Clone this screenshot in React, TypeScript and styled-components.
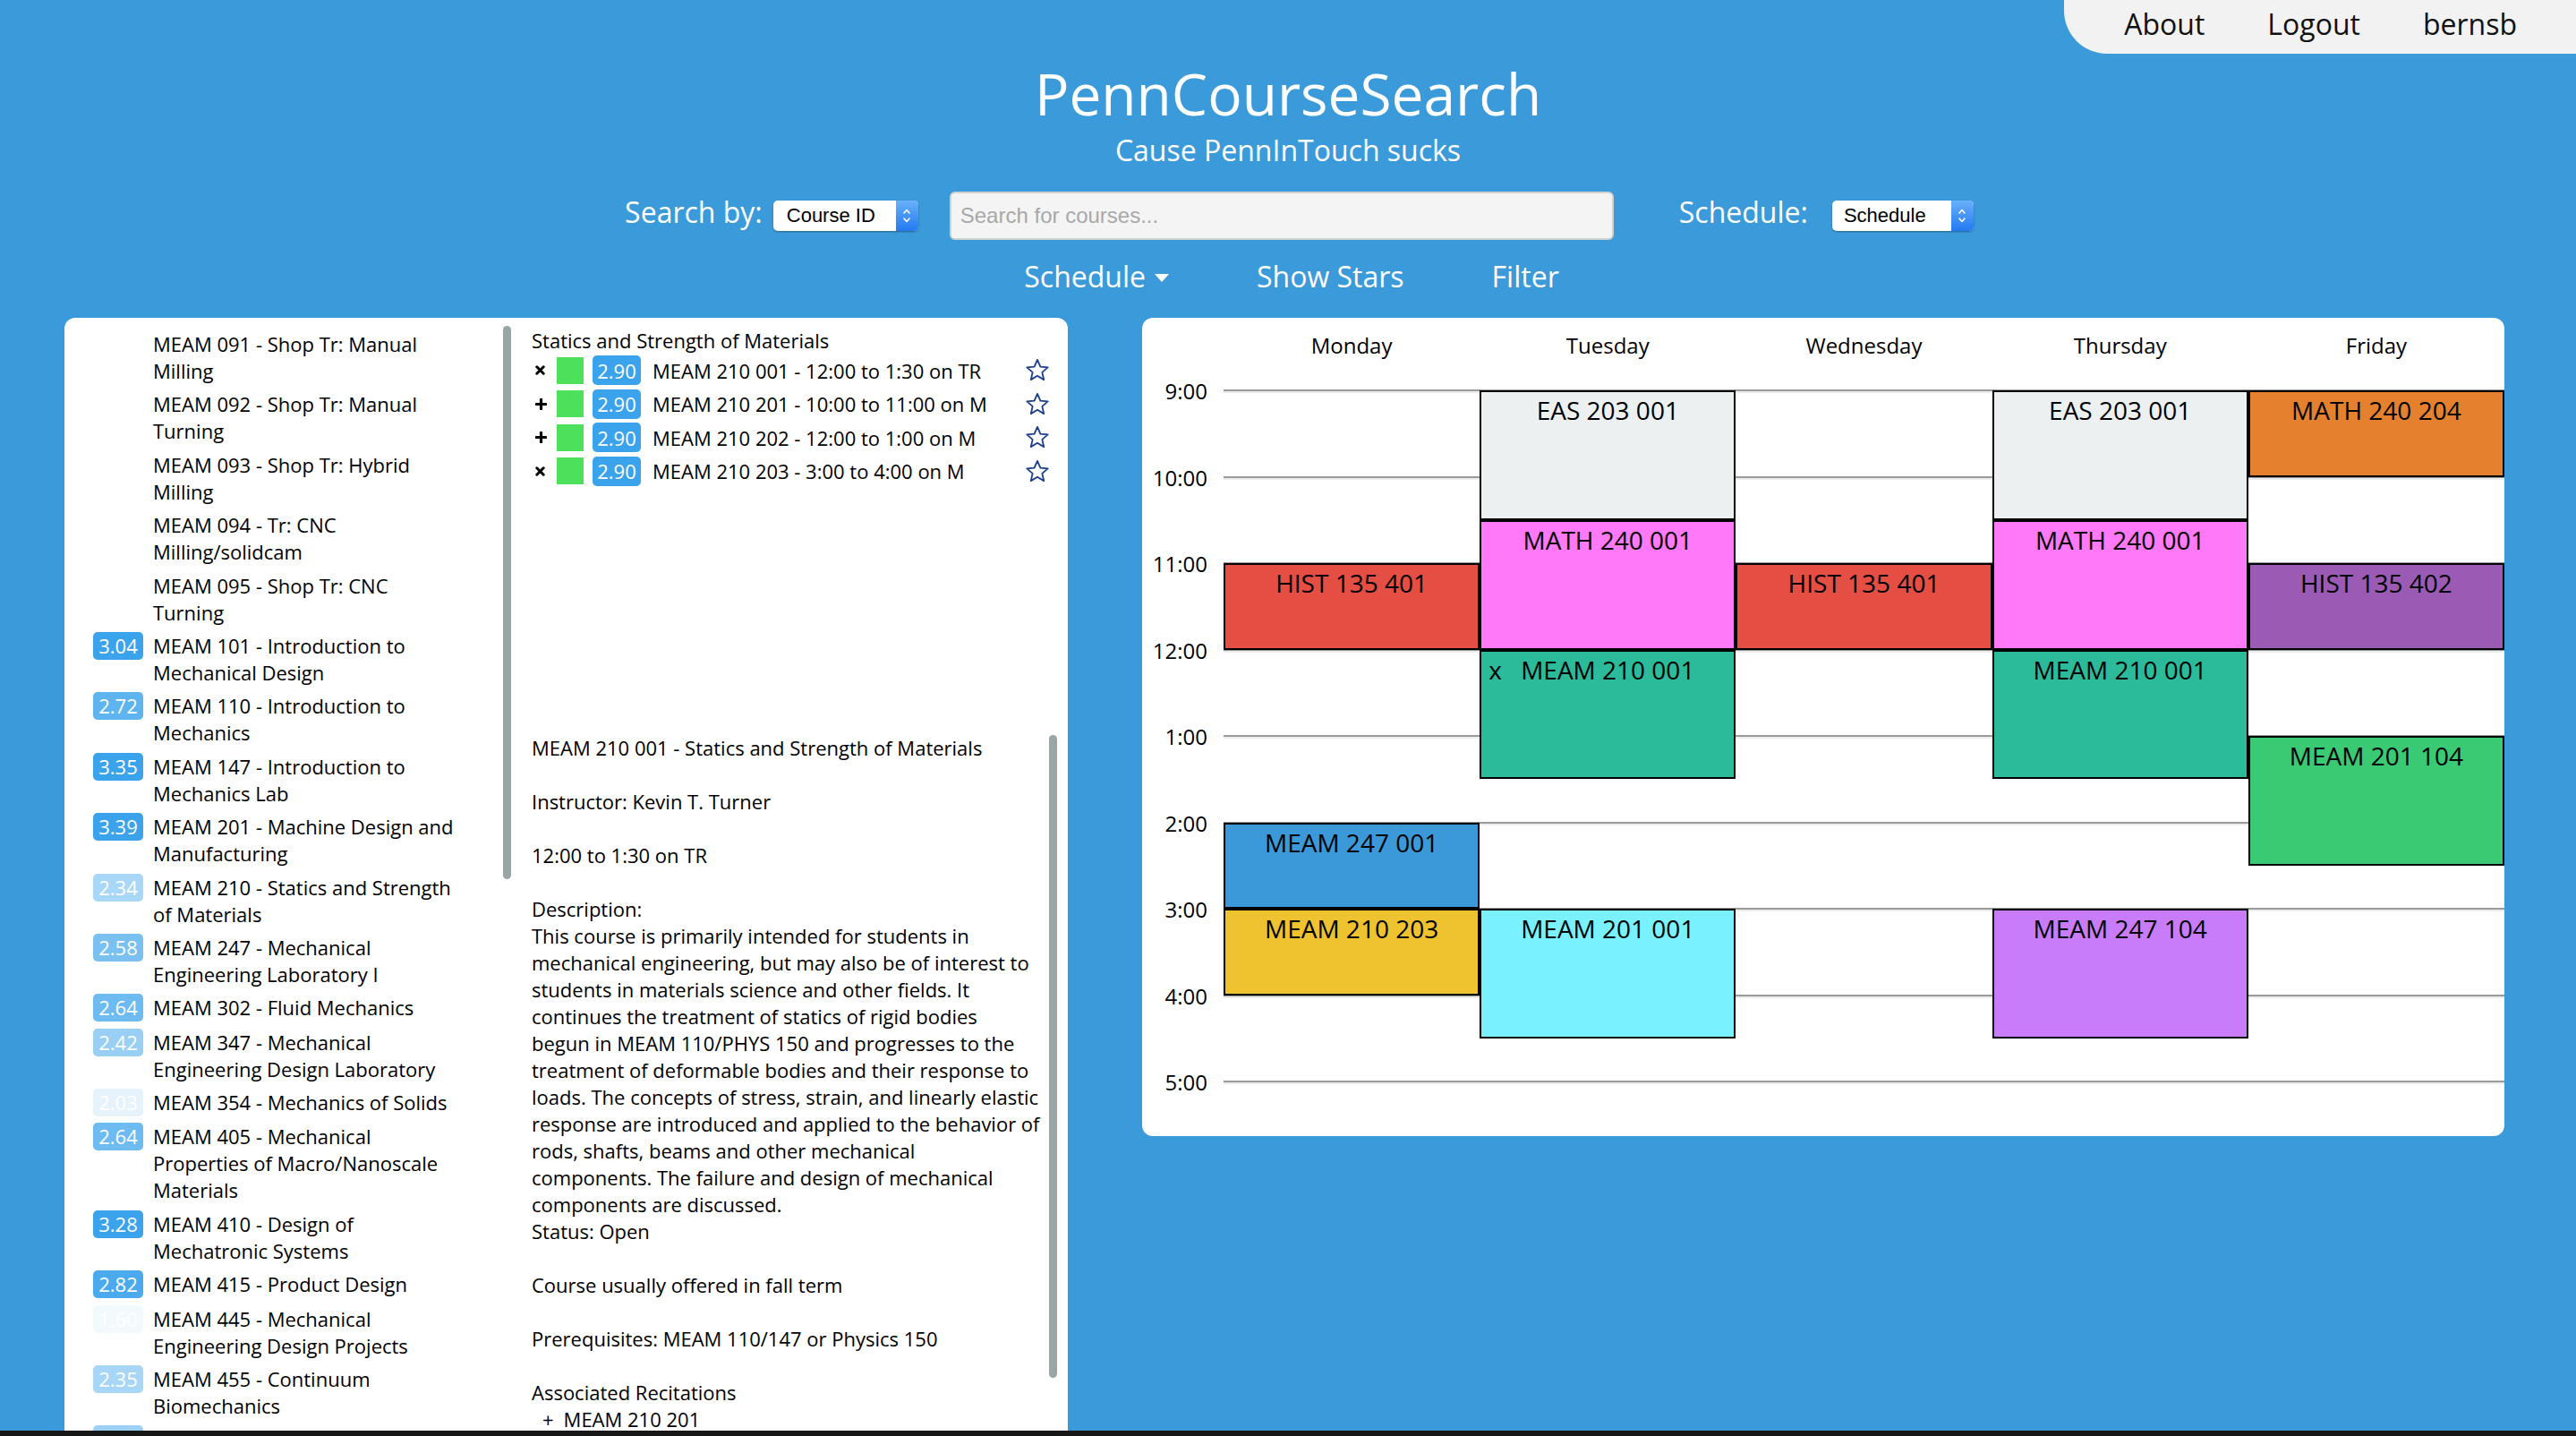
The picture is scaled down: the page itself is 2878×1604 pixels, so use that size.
import React from "react";
import styled, { createGlobalStyle } from "styled-components";

const GlobalStyle = createGlobalStyle`
  html, body { margin: 0; padding: 0; }
  body {
    background: #3b9ad9;
    font-family: "Open Sans", "Noto Sans", sans-serif;
    color: #000;
  }
  * { box-sizing: border-box; }
`;

const Page = styled.div`
  height: 1604px;
  display: flex;
  flex-direction: column;
  overflow: hidden;
`;

const Main = styled.div`
  flex: 1;
  min-height: 0;
  overflow: hidden;
  display: flex;
  flex-direction: column;
`;

const DesktopStrip = styled.div`
  height: 6px;
  flex-shrink: 0;
  background: #171717;
`;

const TopBar = styled.div`
  display: flex;
  justify-content: flex-end;
  height: 60px;
  flex-shrink: 0;
`;

const NavPill = styled.nav`
  display: flex;
  align-items: flex-start;
  gap: 70px;
  height: 60px;
  padding: 5px 66px 0 67px;
  background: #f2f2f2;
  border-bottom-left-radius: 48px;
`;

const NavLink = styled.a`
  font-size: 32px;
  color: #111;
  text-decoration: none;
`;

const Title = styled.h1`
  margin: 4px 0 0;
  font-size: 64px;
  line-height: 82px;
  font-weight: 400;
  color: #fff;
  text-align: center;
`;

const Subtitle = styled.div`
  font-size: 32px;
  color: #fff;
  text-align: center;
`;

const SearchRow = styled.div`
  margin-top: 25px;
  height: 54px;
  display: flex;
  justify-content: center;
  align-items: center;
  padding-left: 25px;
  flex-shrink: 0;
`;

const BarLabel = styled.span<{ $gap: number }>`
  font-size: 32px;
  color: #fff;
  margin-right: ${(p) => p.$gap}px;
  margin-bottom: 10px;
  white-space: nowrap;
`;

const SelectBox = styled.div<{ $width: number; $gap: number }>`
  width: ${(p) => p.$width}px;
  height: 34px;
  margin-right: ${(p) => p.$gap}px;
  display: flex;
  align-items: center;
  background: #fff;
  border-radius: 5px;
  box-shadow: 0 1px 2px rgba(0, 0, 0, 0.35);
  font-family: "Liberation Sans", Arial, sans-serif;
  font-size: 22px;
  color: #000;
`;

const SelectText = styled.span<{ $pad: number }>`
  flex: 1;
  padding-left: ${(p) => p.$pad}px;
  white-space: nowrap;
`;

const SelectArrows = styled.span`
  width: 25px;
  height: 34px;
  display: flex;
  align-items: center;
  justify-content: center;
  border-radius: 0 5px 5px 0;
  background: linear-gradient(#69b1fb, #2379f1);
`;

const SearchInput = styled.div`
  width: 742px;
  height: 54px;
  margin-right: 73px;
  display: flex;
  align-items: center;
  padding-left: 10px;
  background: #f4f4f4;
  border: 2px solid #d2d2d2;
  border-radius: 6px;
  font-family: "Liberation Sans", Arial, sans-serif;
  font-size: 24px;
  color: #a8a8a8;
`;

const MenuRow = styled.div`
  margin-top: 19px;
  display: flex;
  justify-content: center;
  gap: 98px;
  padding-left: 8px;
  flex-shrink: 0;
`;

const MenuItem = styled.span`
  font-size: 32px;
  color: #fff;
  display: flex;
  align-items: center;
  gap: 10px;
`;

const Caret = styled.span`
  width: 0;
  height: 0;
  margin-top: 4px;
  border-left: 8px solid transparent;
  border-right: 8px solid transparent;
  border-top: 9px solid #fff;
`;

const PanelRow = styled.div`
  margin-top: 25px;
  display: flex;
  align-items: flex-start;
  gap: 83px;
  padding: 0 80px 0 72px;
`;

const LeftPanel = styled.section`
  width: 1121px;
  height: 1400px;
  flex-shrink: 0;
  display: flex;
  background: #fff;
  border-radius: 12px 12px 0 0;
  overflow: hidden;
`;

const CourseColumn = styled.div`
  width: 499px;
  display: flex;
  flex-shrink: 0;
`;

const CourseList = styled.ul`
  flex: 1;
  margin: 0;
  list-style: none;
  padding: 14px 0 0 32px;
  display: flex;
  flex-direction: column;
  gap: 7.4px;
`;

const CourseEntry = styled.li`
  display: flex;
  align-items: flex-start;
  gap: 11px;
`;

const Rating = styled.span<{ $alpha: number }>`
  width: 56px;
  height: 31px;
  flex-shrink: 0;
  display: flex;
  align-items: center;
  justify-content: center;
  border-radius: 5px;
  background: ${(p) => `rgba(59, 163, 236, ${p.$alpha})`};
  color: #fff;
  font-size: 22px;
  line-height: 31px;
`;

const RatingSpacer = styled.span`
  width: 56px;
  flex-shrink: 0;
`;

const CourseName = styled.span`
  width: 345px;
  font-size: 22px;
  line-height: 30px;
`;

const ScrollTrack = styled.div<{ $top: number }>`
  width: 9px;
  flex-shrink: 0;
  padding-top: ${(p) => p.$top}px;
`;

const ScrollThumb = styled.div<{ $height: number }>`
  width: 9px;
  height: ${(p) => p.$height}px;
  border-radius: 5px;
  background: #9aa5a6;
`;

const SectionColumn = styled.div`
  flex: 1;
  display: flex;
  flex-direction: column;
  padding: 10px 12px 0 23px;
`;

const SectionPicker = styled.div`
  height: 455px;
  flex-shrink: 0;
`;

const SectionTitle = styled.div`
  font-size: 22px;
  line-height: 30px;
`;

const SectionRow = styled.div`
  height: 37.5px;
  display: flex;
  align-items: center;
`;

const ToggleCell = styled.span`
  width: 28px;
  padding-left: 4px;
  display: flex;
  align-items: center;
`;

const ColorSquare = styled.span`
  width: 30px;
  height: 30px;
  background: #4de05b;
`;

const SectionRating = styled.span`
  margin-left: 10px;
  width: 54px;
  height: 33px;
  display: flex;
  align-items: center;
  justify-content: center;
  border-radius: 5px;
  background: #3ba3ec;
  color: #fff;
  font-size: 22px;
`;

const SectionLabel = styled.span`
  margin-left: 13px;
  font-size: 22px;
  white-space: nowrap;
`;

const StarCell = styled.span`
  margin-left: auto;
  margin-right: 8px;
  display: flex;
`;

const DescriptionArea = styled.div`
  display: flex;
  gap: 8px;
`;

const DescText = styled.div`
  width: 570px;
  font-size: 22px;
  line-height: 30px;
  white-space: nowrap;
`;

const Para = styled.p`
  margin: 0 0 30px;
`;

const RecitationItem = styled.div`
  display: flex;
  gap: 11px;
  padding-left: 12px;
`;

const ScheduleCard = styled.section`
  width: 1522px;
  height: 914px;
  flex-shrink: 0;
  display: flex;
  flex-direction: column;
  background: #fff;
  border-radius: 12px;
`;

const DayHeader = styled.div`
  height: 81px;
  flex-shrink: 0;
  display: grid;
  grid-template-columns: 91px repeat(5, 1fr);
  padding-top: 14px;
  font-size: 24px;
  text-align: center;
`;

const ScheduleBody = styled.div`
  position: relative;
  flex: 1;
`;

const HourRow = styled.div<{ $height: number }>`
  height: ${(p) => p.$height}px;
  display: grid;
  grid-template-columns: 91px 1fr;
  align-items: start;
`;

const HourLabel = styled.span`
  font-size: 24px;
  text-align: right;
  padding-right: 18px;
  transform: translateY(-48%);
`;

const HourLine = styled.div`
  height: 4px;
  margin-top: -1px;
  border-top: 2px solid #9a9a9a;
  background: #ececec;
`;

const EventLayer = styled.div`
  position: absolute;
  top: 0;
  left: 91px;
  right: 0;
  display: grid;
  grid-template-columns: repeat(5, 1fr);
  grid-template-rows: repeat(16, 48.25px);
`;

const EventBox = styled.div<{ $col: number; $start: number; $span: number; $bg: string }>`
  position: relative;
  grid-column: ${(p) => p.$col};
  grid-row: ${(p) => `${p.$start} / span ${p.$span}`};
  background: ${(p) => p.$bg};
  border: 2px solid #000;
  padding-top: 1px;
  font-size: 28px;
  text-align: center;
  white-space: nowrap;
`;

const EventRemove = styled.span`
  position: absolute;
  left: 8px;
  top: 1px;
`;

const ArrowsIcon = () => (
  <svg width="10" height="20" viewBox="0 0 10 20">
    <path d="M2 7 L5 3.5 L8 7" fill="none" stroke="#fff" strokeWidth="1.6" strokeLinecap="round" strokeLinejoin="round" />
    <path d="M2 13 L5 16.5 L8 13" fill="none" stroke="#fff" strokeWidth="1.6" strokeLinecap="round" strokeLinejoin="round" />
  </svg>
);

const TimesIcon = () => (
  <svg width="11" height="11" viewBox="0 0 11 11">
    <path d="M1.8 1.8 L9.2 9.2 M9.2 1.8 L1.8 9.2" stroke="#000" strokeWidth="3" strokeLinecap="round" />
  </svg>
);

const PlusIcon = () => (
  <svg width="13" height="13" viewBox="0 0 13 13">
    <path d="M6.5 1.2 V11.8 M1.2 6.5 H11.8" stroke="#000" strokeWidth="3.2" strokeLinecap="round" />
  </svg>
);

const StarIcon = () => (
  <svg width="28" height="27" viewBox="0 0 24 23">
    <path
      d="M12 1.6 L14.9 8.2 L22 8.8 L16.6 13.5 L18.2 20.6 L12 16.9 L5.8 20.6 L7.4 13.5 L2 8.8 L9.1 8.2 Z"
      fill="none"
      stroke="#1d3f8c"
      strokeWidth="1.6"
      strokeLinejoin="round"
    />
  </svg>
);

type Course = { rating: number | null; name: string };

const courses: Course[] = [
  { rating: null, name: "MEAM 091 - Shop Tr: Manual Milling" },
  { rating: null, name: "MEAM 092 - Shop Tr: Manual Turning" },
  { rating: null, name: "MEAM 093 - Shop Tr: Hybrid Milling" },
  { rating: null, name: "MEAM 094 - Tr: CNC Milling/solidcam" },
  { rating: null, name: "MEAM 095 - Shop Tr: CNC Turning" },
  { rating: 3.04, name: "MEAM 101 - Introduction to Mechanical Design" },
  { rating: 2.72, name: "MEAM 110 - Introduction to Mechanics" },
  { rating: 3.35, name: "MEAM 147 - Introduction to Mechanics Lab" },
  { rating: 3.39, name: "MEAM 201 - Machine Design and Manufacturing" },
  { rating: 2.34, name: "MEAM 210 - Statics and Strength of Materials" },
  { rating: 2.58, name: "MEAM 247 - Mechanical Engineering Laboratory I" },
  { rating: 2.64, name: "MEAM 302 - Fluid Mechanics" },
  { rating: 2.42, name: "MEAM 347 - Mechanical Engineering Design Laboratory" },
  { rating: 2.03, name: "MEAM 354 - Mechanics of Solids" },
  { rating: 2.64, name: "MEAM 405 - Mechanical Properties of Macro/Nanoscale Materials" },
  { rating: 3.28, name: "MEAM 410 - Design of Mechatronic Systems" },
  { rating: 2.82, name: "MEAM 415 - Product Design" },
  { rating: 1.6, name: "MEAM 445 - Mechanical Engineering Design Projects" },
  { rating: 2.35, name: "MEAM 455 - Continuum Biomechanics" },
  { rating: 2.4, name: "MEAM 470 - Heat and Mass Transfer" },
  { rating: 2.9, name: "MEAM 502 - Energy Engineering in Power Plants" },
];

const ratingAlpha = (r: number) => Math.min(1, Math.max(0.06, (r - 1.9) / 1.0));

const sections = [
  { kind: "remove", label: "MEAM 210 001 - 12:00 to 1:30 on TR" },
  { kind: "add", label: "MEAM 210 201 - 10:00 to 11:00 on M" },
  { kind: "add", label: "MEAM 210 202 - 12:00 to 1:00 on M" },
  { kind: "remove", label: "MEAM 210 203 - 3:00 to 4:00 on M" },
];

const descriptionLines = [
  "This course is primarily intended for students in",
  "mechanical engineering, but may also be of interest to",
  "students in materials science and other fields. It",
  "continues the treatment of statics of rigid bodies",
  "begun in MEAM 110/PHYS 150 and progresses to the",
  "treatment of deformable bodies and their response to",
  "loads. The concepts of stress, strain, and linearly elastic",
  "response are introduced and applied to the behavior of",
  "rods, shafts, beams and other mechanical",
  "components. The failure and design of mechanical",
  "components are discussed.",
];

const days = ["Monday", "Tuesday", "Wednesday", "Thursday", "Friday"];
const hours = ["9:00", "10:00", "11:00", "12:00", "1:00", "2:00", "3:00", "4:00", "5:00"];

type CalEvent = { name: string; day: number; start: number; end: number; color: string; removable?: boolean };

const events: CalEvent[] = [
  { name: "EAS 203 001", day: 2, start: 9, end: 10.5, color: "#ecf0f1" },
  { name: "EAS 203 001", day: 4, start: 9, end: 10.5, color: "#ecf0f1" },
  { name: "MATH 240 001", day: 2, start: 10.5, end: 12, color: "#ff79f8" },
  { name: "MATH 240 001", day: 4, start: 10.5, end: 12, color: "#ff79f8" },
  { name: "HIST 135 401", day: 1, start: 11, end: 12, color: "#e54e43" },
  { name: "HIST 135 401", day: 3, start: 11, end: 12, color: "#e54e43" },
  { name: "MEAM 210 001", day: 2, start: 12, end: 13.5, color: "#2bbb9b", removable: true },
  { name: "MEAM 210 001", day: 4, start: 12, end: 13.5, color: "#2bbb9b" },
  { name: "MATH 240 204", day: 5, start: 9, end: 10, color: "#e5802f" },
  { name: "HIST 135 402", day: 5, start: 11, end: 12, color: "#9b5bb4" },
  { name: "MEAM 201 104", day: 5, start: 13, end: 14.5, color: "#39ca73" },
  { name: "MEAM 247 001", day: 1, start: 14, end: 15, color: "#3b99d9" },
  { name: "MEAM 210 203", day: 1, start: 15, end: 16, color: "#efc32f" },
  { name: "MEAM 201 001", day: 2, start: 15, end: 16.5, color: "#7af1fe" },
  { name: "MEAM 247 104", day: 4, start: 15, end: 16.5, color: "#c97cf9" },
];

export default function App() {
  return (
    <Page>
      <GlobalStyle />
      <Main>
        <TopBar>
          <NavPill>
            <NavLink>About</NavLink>
            <NavLink>Logout</NavLink>
            <NavLink>bernsb</NavLink>
          </NavPill>
        </TopBar>
        <Title>PennCourseSearch</Title>
        <Subtitle>Cause PennInTouch sucks</Subtitle>

        <SearchRow>
          <BarLabel $gap={12}>Search by:</BarLabel>
          <SelectBox $width={162} $gap={35}>
            <SelectText $pad={15}>Course ID</SelectText>
            <SelectArrows>
              <ArrowsIcon />
            </SelectArrows>
          </SelectBox>
          <SearchInput>Search for courses...</SearchInput>
          <BarLabel $gap={27}>Schedule:</BarLabel>
          <SelectBox $width={158} $gap={0}>
            <SelectText $pad={13}>Schedule</SelectText>
            <SelectArrows>
              <ArrowsIcon />
            </SelectArrows>
          </SelectBox>
        </SearchRow>

        <MenuRow>
          <MenuItem>
            Schedule
            <Caret />
          </MenuItem>
          <MenuItem>Show Stars</MenuItem>
          <MenuItem>Filter</MenuItem>
        </MenuRow>

        <PanelRow>
          <LeftPanel>
            <CourseColumn>
              <CourseList>
                {courses.map((c) => (
                  <CourseEntry key={c.name}>
                    {c.rating === null ? (
                      <RatingSpacer />
                    ) : (
                      <Rating $alpha={ratingAlpha(c.rating)}>{c.rating.toFixed(2)}</Rating>
                    )}
                    <CourseName>{c.name}</CourseName>
                  </CourseEntry>
                ))}
              </CourseList>
              <ScrollTrack $top={9}>
                <ScrollThumb $height={618} />
              </ScrollTrack>
            </CourseColumn>

            <SectionColumn>
              <SectionPicker>
                <SectionTitle>Statics and Strength of Materials</SectionTitle>
                {sections.map((s) => (
                  <SectionRow key={s.label}>
                    <ToggleCell>{s.kind === "remove" ? <TimesIcon /> : <PlusIcon />}</ToggleCell>
                    <ColorSquare />
                    <SectionRating>2.90</SectionRating>
                    <SectionLabel>{s.label}</SectionLabel>
                    <StarCell>
                      <StarIcon />
                    </StarCell>
                  </SectionRow>
                ))}
              </SectionPicker>

              <DescriptionArea>
                <DescText>
                  <Para>MEAM 210 001 - Statics and Strength of Materials</Para>
                  <Para>Instructor: Kevin T. Turner</Para>
                  <Para>12:00 to 1:30 on TR</Para>
                  <Para>
                    Description:
                    {descriptionLines.map((line) => (
                      <React.Fragment key={line}>
                        <br />
                        {line}
                      </React.Fragment>
                    ))}
                    <br />
                    Status: Open
                  </Para>
                  <Para>Course usually offered in fall term</Para>
                  <Para>Prerequisites: MEAM 110/147 or Physics 150</Para>
                  <div>Associated Recitations</div>
                  <RecitationItem>
                    <span>+</span>
                    <span>MEAM 210 201</span>
                  </RecitationItem>
                  <RecitationItem>
                    <span>+</span>
                    <span>MEAM 210 202</span>
                  </RecitationItem>
                </DescText>
                <ScrollTrack $top={1}>
                  <ScrollThumb $height={718} />
                </ScrollTrack>
              </DescriptionArea>
            </SectionColumn>
          </LeftPanel>

          <ScheduleCard>
            <DayHeader>
              <span />
              {days.map((d) => (
                <span key={d}>{d}</span>
              ))}
            </DayHeader>
            <ScheduleBody>
              {hours.map((h, i) => (
                <HourRow key={h} $height={i === hours.length - 1 ? 61 : 96.5}>
                  <HourLabel>{h}</HourLabel>
                  <HourLine />
                </HourRow>
              ))}
              <EventLayer>
                {events.map((e) => (
                  <EventBox
                    key={`${e.name}-${e.day}`}
                    $col={e.day}
                    $start={(e.start - 9) * 2 + 1}
                    $span={(e.end - e.start) * 2}
                    $bg={e.color}
                  >
                    {e.removable && <EventRemove>x</EventRemove>}
                    {e.name}
                  </EventBox>
                ))}
              </EventLayer>
            </ScheduleBody>
          </ScheduleCard>
        </PanelRow>
      </Main>
      <DesktopStrip />
    </Page>
  );
}
